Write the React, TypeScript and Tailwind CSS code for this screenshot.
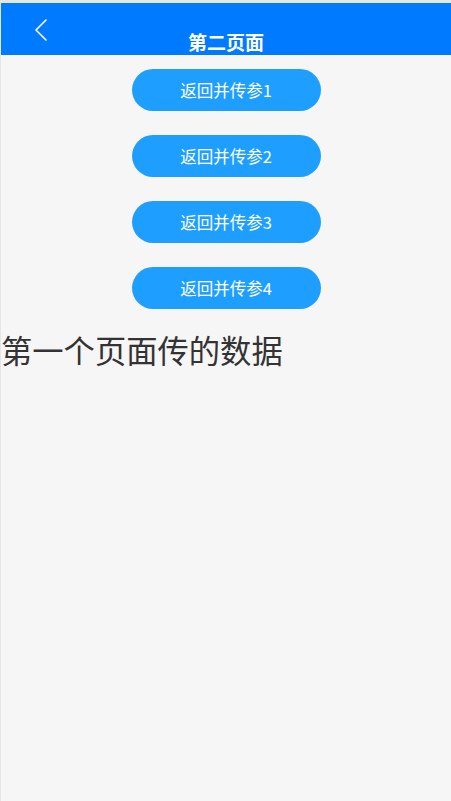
const buttons = ['返回并传参1', '返回并传参2', '返回并传参3', '返回并传参4'];

export default function App() {
  return (
    <div
      className="h-[801px] bg-[#f6f6f6] border-t-[3px] border-l border-[#e6e6e6]"
      style={{ fontFamily: '"Noto Sans CJK SC", "Noto Sans", sans-serif' }}
    >
      {/* Nav bar */}
      <div className="h-[52px] bg-[#007aff] grid grid-cols-[1fr_auto_1fr]">
        <div className="pl-[33px] pt-[16px]">
          <svg width="14" height="22" viewBox="0 0 14 22" fill="none">
            <path d="M12 1 L2 11 L12 21" stroke="white" strokeWidth="1.6" strokeLinecap="round" strokeLinejoin="round" />
          </svg>
        </div>
        <div className="self-end text-white text-[19px] font-bold leading-[26px]">第二页面</div>
        <div />
      </div>

      {/* Buttons */}
      <div className="flex flex-col items-center gap-[24px] pt-[14px]">
        {buttons.map((label) => (
          <button
            key={label}
            className="w-[189px] h-[42px] rounded-full bg-[#1e9fff] text-white text-[16.5px] leading-none"
          >
            {label}
          </button>
        ))}
      </div>

      <p className="mt-[21px] text-[31.3px] leading-[40px] text-[#333333]">第一个页面传的数据</p>
    </div>
  );
}
